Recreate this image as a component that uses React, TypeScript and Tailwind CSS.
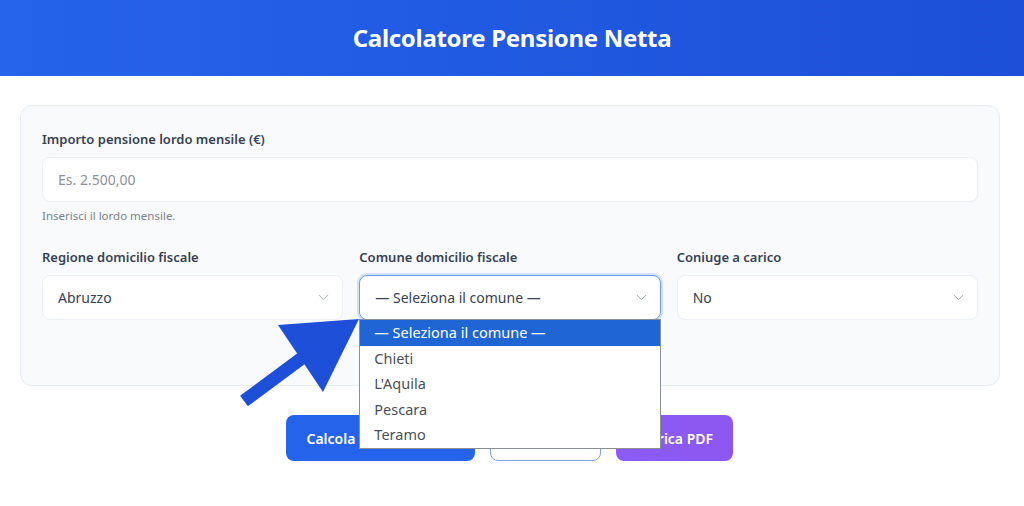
import React from "react";
import { ChevronDown } from "lucide-react";

const font = { fontFamily: '"Noto Sans", "Open Sans", Arial, sans-serif' };

const comuni = ["— Seleziona il comune —", "Chieti", "L'Aquila", "Pescara", "Teramo"];

const SelectBox: React.FC<{ value: string; focused?: boolean }> = ({ value, focused }) => (
  <div
    className={
      "flex h-[45px] items-center justify-between rounded-lg bg-white pl-[15px] pr-[10px] text-[14px] text-[#374151] " +
      (focused
        ? "border border-[#6f9df2] shadow-[0_0_0_2px_rgba(96,150,240,0.25)]"
        : "border border-[#eceff3]")
    }
  >
    <span>{value}</span>
    <ChevronDown size={17} strokeWidth={1.4} className="text-[#a3a8b1]" />
  </div>
);

const Label: React.FC<{ children: React.ReactNode }> = ({ children }) => (
  <div className="mb-[8px] text-[13px] font-semibold leading-[20px] text-[#374151]">{children}</div>
);

export default function App() {
  return (
    <div className="relative min-h-[506px] bg-white" style={font}>
      {/* Header */}
      <header className="flex h-[76px] items-center justify-center bg-gradient-to-r from-[#2563eb] to-[#1d4fd8]">
        <h1 className="text-[24px] font-bold tracking-[-0.3px] text-white">Calcolatore Pensione Netta</h1>
      </header>

      {/* Card */}
      <div className="ml-[20px] mr-[24px] mt-[29px] h-[281px] rounded-xl border border-[#e8ecf1] bg-[#f8fafc] px-[21px] pt-[23px]">
        <Label>Importo pensione lordo mensile (€)</Label>
        <div className="flex h-[45px] items-center rounded-lg border border-[#eceff3] bg-white pl-[15px] text-[14px] text-[#8b9099]">
          Es. 2.500,00
        </div>
        <div className="mt-[6px] text-[11.5px] leading-[16px] text-[#7b818b]">Inserisci il lordo mensile.</div>

        <div className="mt-[23px] grid grid-cols-3 gap-[16px]">
          <div>
            <Label>Regione domicilio fiscale</Label>
            <SelectBox value="Abruzzo" />
          </div>
          <div className="relative">
            <Label>Comune domicilio fiscale</Label>
            <SelectBox value="— Seleziona il comune —" focused />
            {/* open dropdown */}
            <div className="absolute left-0 right-0 top-[calc(100%-1px)] z-20 border border-[#8a8f96] bg-white text-[14.5px] text-[#4b5058]">
              {comuni.map((c, i) => (
                <div
                  key={c}
                  className={
                    "flex h-[25.6px] items-center pl-[14px] " + (i === 0 ? "bg-[#1f66d4] text-white" : "")
                  }
                >
                  {c}
                </div>
              ))}
            </div>
          </div>
          <div>
            <Label>Coniuge a carico</Label>
            <SelectBox value="No" />
          </div>
        </div>
      </div>

      {/* Buttons */}
      <div className="mr-[6px] mt-[29px] flex justify-center gap-[15px]">
        <button className="h-[46px] w-[189px] rounded-lg bg-[#2563eb] pl-[21px] text-left text-[14px] font-semibold text-white">
          Calcola pensione netta
        </button>
        <button className="h-[46px] w-[111px] rounded-lg border border-[#7fa3e6] bg-white text-[14px] font-semibold text-[#2563eb]">
          Reset
        </button>
        <button className="h-[46px] w-[117px] rounded-lg bg-gradient-to-r from-[#8b5cf6] to-[#8b57f0] text-[14px] font-semibold text-white">
          Scarica PDF
        </button>
      </div>

      {/* Arrow annotation */}
      <svg className="absolute left-[230px] top-[310px] z-10" width="140" height="100" viewBox="0 0 140 100">
        <line x1="14" y1="91" x2="72" y2="48" stroke="#1d4fd8" strokeWidth="13" />
        <polygon points="48,15 129,9 93,82" fill="#1d4fd8" />
      </svg>
    </div>
  );
}
